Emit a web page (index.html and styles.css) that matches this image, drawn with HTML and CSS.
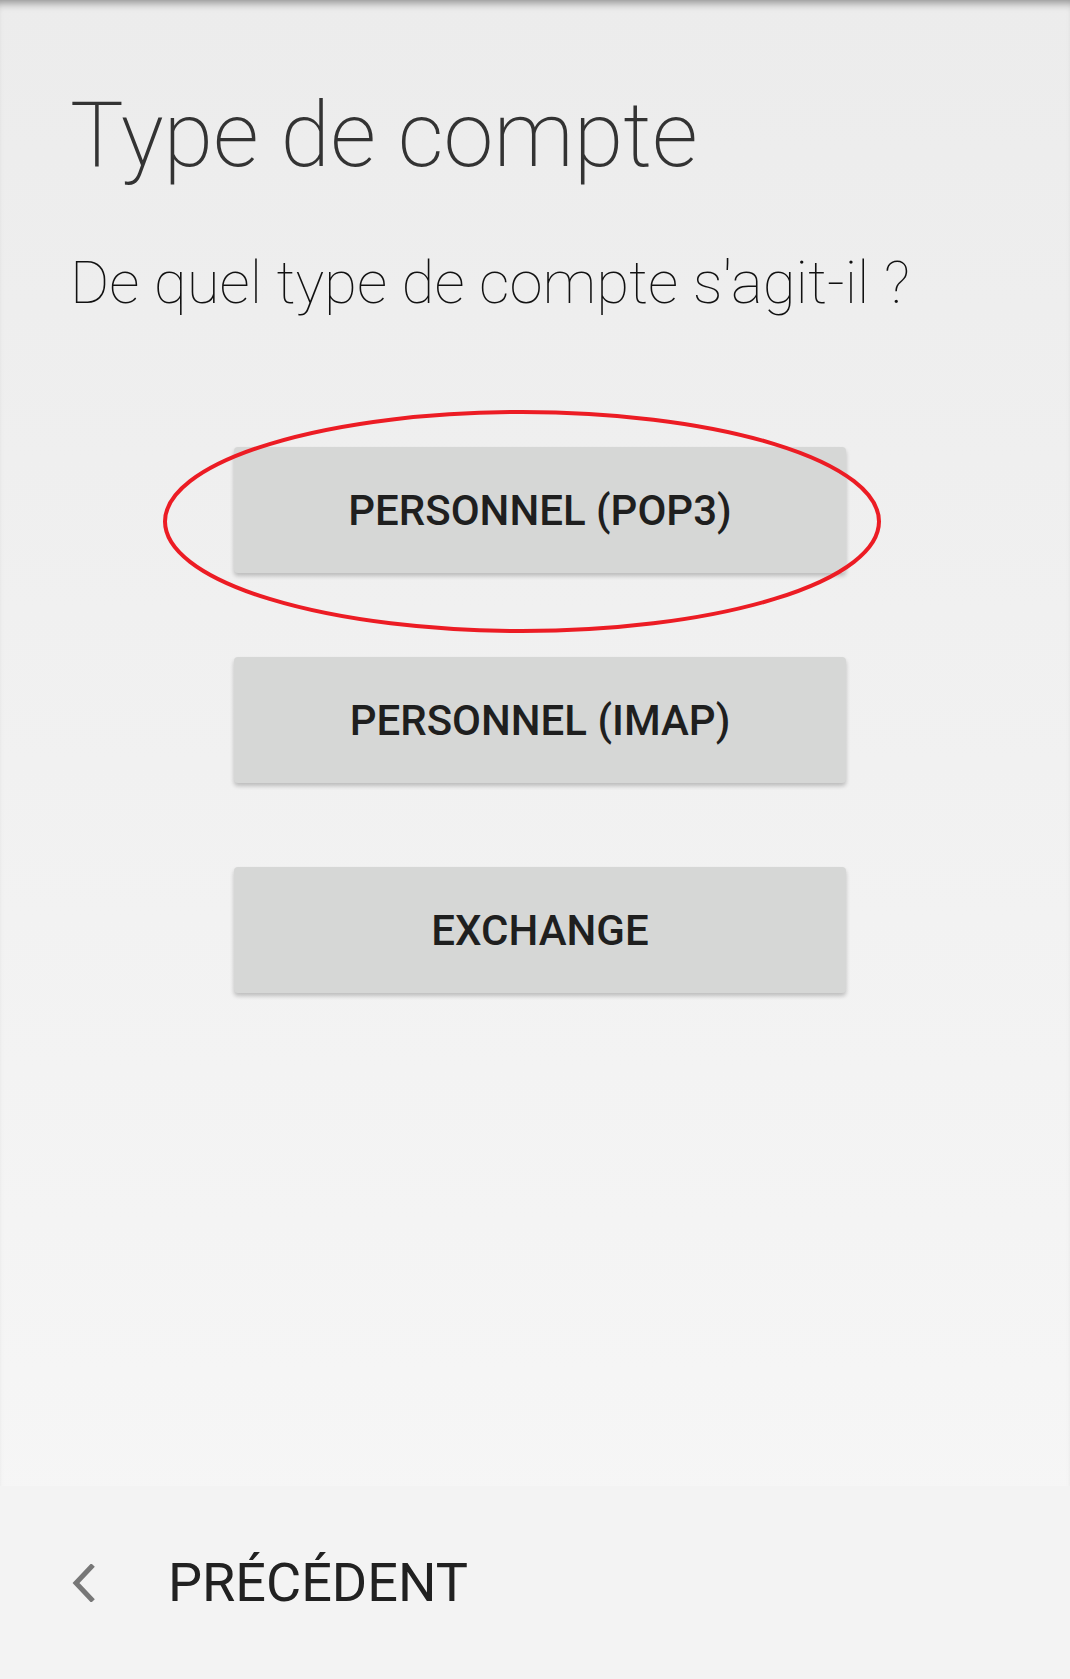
FILE: index.html
```html
<!DOCTYPE html>
<html lang="fr">

<head>
  <meta charset="UTF-8">
  <meta name="viewport" content="width=device-width, initial-scale=1.0">
  <title>Type de compte</title>
  <link rel="stylesheet" href="styles.css">
</head>

<body>

  <div class="page">
    <main class="content">
      <h1 class="title">Type de compte</h1>
      <p class="question">De quel type de compte s'agit-il ?</p>

      <div class="choices">
        <button class="choice">PERSONNEL (POP3)</button>
        <button class="choice">PERSONNEL (IMAP)</button>
        <button class="choice">EXCHANGE</button>
      </div>
    </main>

    <footer class="nav">
      <button class="back">
        <svg class="chevron" width="24" height="38" viewBox="0 0 24 38">
          <polyline points="21,1 4,19 21,37" fill="none" stroke="#777" stroke-width="5" />
        </svg>
        <span>PRÉCÉDENT</span>
      </button>
    </footer>

    <!-- red annotation drawn over the first option -->
    <svg class="circle" width="718" height="223" viewBox="0 0 718 223">
      <ellipse cx="359" cy="111.5" rx="357" ry="109.5" fill="none" stroke="#ec1c24" stroke-width="4" />
    </svg>
  </div>

</body>

</html>
```

FILE: styles.css
```css
body {
  margin: 0;
  font-family: Roboto, "Noto Sans", sans-serif;
  background: #eeeeee;
}

.page {
  position: relative;
  display: flex;
  flex-direction: column;
  height: 1679px;
  background: linear-gradient(#ececec, #f7f7f7);
  box-shadow: inset 0 9px 8px -6px rgba(0, 0, 0, 0.4);
}

.content {
  flex: 1;
  padding-left: 70px;
}

.title {
  margin: 91px 0 0;
  font-size: 90px;
  font-weight: 200;
  line-height: 1;
  color: #333;
}

.question {
  margin: 72px 0 0;
  font-size: 60px;
  font-weight: 100;
  line-height: 1;
  color: #111;
}

.choices {
  display: flex;
  flex-direction: column;
  align-items: center;
  gap: 84px;
  margin: 134px 0 0 -70px;
  padding-left: 10px;
}

.choice {
  width: 612px;
  height: 126px;
  border: none;
  border-radius: 4px;
  background: #d6d7d6;
  box-shadow: 0 3px 4px rgba(0, 0, 0, 0.22);
  font-family: Roboto, sans-serif;
  font-size: 42px;
  font-weight: 500;
  color: #1f1f1f;
}

.nav {
  display: flex;
  align-items: center;
  height: 193px;
  background: #f3f3f3;
}

.back {
  display: flex;
  align-items: center;
  gap: 72px;
  padding: 0 0 0 72px;
  border: none;
  background: none;
  font-family: Roboto, sans-serif;
  font-size: 54px;
  font-weight: 400;
  color: #212121;
}

.chevron {
  display: block;
}

.circle {
  position: absolute;
  left: 163px;
  top: 410px;
}
```
